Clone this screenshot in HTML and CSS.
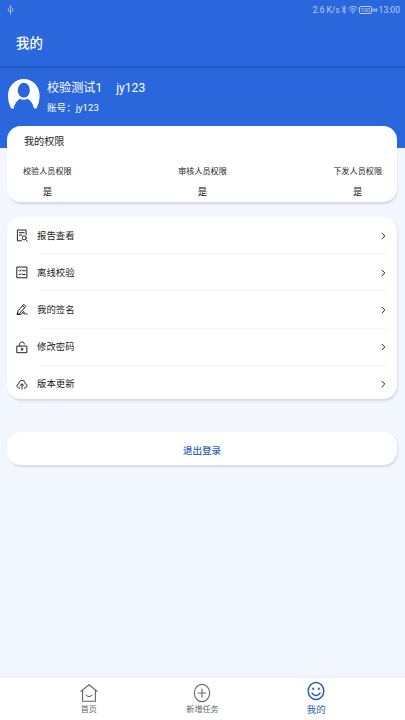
FILE: index.html
```html
<!DOCTYPE html>
<html lang="zh-CN">
<head>
<meta charset="utf-8">
<meta name="viewport" content="width=device-width, initial-scale=1">
<title>我的</title>
<link rel="stylesheet" href="styles.css">
</head>
<body>
<div class="app">
  <header class="top">
    <div class="status">
      <svg class="usb" viewBox="0 0 7 10"><path d="M3.5 1v8M1.3 3.5v2.2l2.2 1.3 2.2-1.3V3.5M2.6 2l.9-1 .9 1"/></svg>
      <div class="status-right">
        <span>2.6 K/s</span>
        <svg class="bt" viewBox="0 0 6 9"><path d="M.8 2.5l4.2 4-2 1.8V.7l2 1.8-4.2 4"/></svg>
        <svg class="wifi" viewBox="0 0 10 9"><path d="M.6 3.3c2.6-2.5 6.2-2.5 8.8 0M2 5c1.8-1.7 4.2-1.7 6 0M3.5 6.6c1-.9 2-.9 3 0M4.7 8h.6"/></svg>
        <span class="battery">100</span>
        <svg class="charge" viewBox="0 0 6 8"><path d="M0 4h6M2 2.3v3.4M4.2 2.3v3.4"/></svg>
        <span>13:00</span>
      </div>
    </div>
    <h1 class="title">我的</h1>
  </header>
  <section class="profile">
    <svg class="avatar" viewBox="0 0 32 34"><path class="avatar-bg" d="M3.2 30.4C1 26.5 0 22 0 17.5A15.8 16.6 0 0 1 31.6 17.5C31.6 22 30.6 26.5 28.4 30.4H26C24.8 25.5 22.8 22.8 19.8 20.8Q15.8 22.8 11.8 20.8C8.8 22.8 6.8 25.5 5.6 30.4Z"/><ellipse class="avatar-head" cx="15.8" cy="12.2" rx="6.1" ry="7.4"/></svg>
    <div class="who">
      <div class="name"><span>校验测试1</span><span>jy123</span></div>
      <div class="account">账号：jy123</div>
    </div>
  </section>
  <main class="main">
    <section class="card rights">
      <h2>我的权限</h2>
      <div class="rights-row">
        <div class="right"><span>校验人员权限</span><b>是</b></div>
        <div class="right"><span>审核人员权限</span><b>是</b></div>
        <div class="right"><span>下发人员权限</span><b>是</b></div>
      </div>
    </section>
    <nav class="card menu">
      <a class="item"><svg class="ico" viewBox="0 0 12 13"><path d="M5.5 11.8H1.4V1h8.7v5M3.4 3.7h4.8M3.4 6.1h2.4M9.7 10.5l1.5 1.6"/><circle cx="8.2" cy="8.9" r="2"/></svg><span>报告查看</span><svg class="go" viewBox="0 0 5 8"><path d="M1 1.2L3.8 4 1 6.8"/></svg></a>
      <a class="item"><svg class="ico" viewBox="0 0 12 13"><path d="M1.2 1h9.7v10.8H1.2zM3 4.5l.8.8 1.2-1.5M3 8.3l.8.8L5 7.6M6.5 4.7h2.8M6.5 8.5h2.8"/></svg><span>离线校验</span><svg class="go" viewBox="0 0 5 8"><path d="M1 1.2L3.8 4 1 6.8"/></svg></a>
      <a class="item"><svg class="ico" viewBox="0 0 12 13"><path d="M1.2 11l.9-3.3L7.8 1.3l2 2L4 10zM6.6 2.7l2 2M1.2 11.4h3.6c1.4 0 1.7-3 3-2.8 1 .2-.7 2.5.3 2.6.7.1.7-.9 1.4-.8.5.1.5.8 1.7.8"/></svg><span>我的签名</span><svg class="go" viewBox="0 0 5 8"><path d="M1 1.2L3.8 4 1 6.8"/></svg></a>
      <a class="item"><svg class="ico" viewBox="0 0 12 13"><path d="M1.2 5.1h9.7v6.6H1.2zM3.6 5V3.3C3.6.2 8.4.2 8.4 3M6 7.1v2.6M5 8.1h2"/></svg><span>修改密码</span><svg class="go" viewBox="0 0 5 8"><path d="M1 1.2L3.8 4 1 6.8"/></svg></a>
      <a class="item"><svg class="ico" viewBox="0 0 12 13"><path d="M3.7 10H3C.3 9.5.5 6.2 2.8 5.8 3 1.2 9 1.2 9.2 5.7c2.4.4 2.5 3.8-.2 4.3h-.7M6 11V6M4.2 7.6L6 5.8l1.8 1.8"/></svg><span>版本更新</span><svg class="go" viewBox="0 0 5 8"><path d="M1 1.2L3.8 4 1 6.8"/></svg></a>
    </nav>
    <button class="card logout">退出登录</button>
  </main>
  <footer class="tabs">
    <a class="tab"><svg viewBox="0 0 18 20"><path d="M1 8.3L9 1.8l8 6.5M2.6 7.3v10.9h12.8V7.3M6 12c1.4 2.1 4.6 2.1 6 0"/></svg><span>首页</span></a>
    <a class="tab"><svg viewBox="0 0 18 20"><ellipse cx="9" cy="10" rx="7.7" ry="8.6"/><path d="M9 6v8M5.3 10h7.4"/></svg><span>新增任务</span></a>
    <a class="tab active"><svg viewBox="0 0 18 20"><ellipse cx="9" cy="10" rx="7.8" ry="8.6"/><path d="M5 12c1.5 3.2 6.5 3.2 8 0"/><path class="eyes" d="M6.2 7.5v.5M11.8 7.5v.5"/></svg><span>我的</span></a>
  </footer>
</div>
</body>
</html>
```
FILE: styles.css
```css
* { box-sizing: border-box; }
body { margin: 0; font-family: Roboto, "Noto Sans CJK SC", sans-serif; color: #222; }
svg { display: block; flex: none; fill: none; stroke: currentColor; stroke-linecap: round; stroke-linejoin: round; }
h1, h2 { margin: 0; font-weight: 400; }
.app {
  height: 720px;
  display: flex;
  flex-direction: column;
  background: linear-gradient(#2a67dc 148px, #f2f6fe 148px);
}
.top { height: 66px; color: #fff; }
.status {
  height: 19px;
  padding: 0 5px 0 7px;
  display: flex;
  align-items: center;
  justify-content: space-between;
  font-size: 8.6px;
  color: #b9cef7;
}
.status-right { display: flex; align-items: center; }
.status-right span:first-child { letter-spacing: -.1px; }
.usb { width: 7px; height: 10px; stroke-width: .8; }
.bt { width: 6px; height: 9px; margin-left: 1px; stroke-width: .8; }
.wifi { width: 10px; height: 9px; margin-left: 1px; stroke-width: 1; }
.battery {
  width: 13px;
  height: 8px;
  margin-left: 1px;
  border: .8px solid currentColor;
  border-radius: 2px;
  font-size: 6px;
  line-height: 6px;
  text-align: center;
  letter-spacing: -.2px;
}
.charge { width: 6px; height: 8px; margin-right: 1px; stroke-width: .8; }
.title { padding: 14px 0 0 16px; font-size: 13.4px; line-height: 22px; font-weight: 500; }
.profile {
  height: 60px;
  padding: 11px 0 0 8px;
  border-top: 2px solid #215abf;
  display: flex;
  color: #fff;
}
.avatar { width: 32px; height: 34px; margin-top: -1px; stroke: none; }
.avatar-bg { fill: #fff; }
.avatar-head { fill: #2a67dc; }
.who { margin: 1px 0 0 7px; }
.name { display: flex; gap: 14px; font-size: 12.1px; line-height: 16px; }
.account { margin-top: 5px; font-size: 9.6px; line-height: 14px; }
.main { flex: 1; padding: 0 8px 0 7px; }
.card { background: #fff; box-shadow: 1px 3px 2px -1px #d5dce6, 1px 1px 2px #dce2eb; }
.rights { height: 76px; border-radius: 14px; padding: 8px 15px 0 16px; box-shadow: 1px 3px 2px -1px rgba(60, 80, 110, .18); }
.rights h2 { padding-left: 1px; font-size: 10.1px; line-height: 16px; }
.rights-row { margin-top: 14px; display: flex; justify-content: space-between; }
.right { display: flex; flex-direction: column; align-items: center; font-size: 8.1px; line-height: 14px; }
.right b { margin-top: 7px; font-size: 9.3px; line-height: 14px; font-weight: 400; }
.menu { height: 182px; margin-top: 15px; border-radius: 14px; }
.item {
  height: 37.2px;
  padding: 0 11px 0 9px;
  display: flex;
  align-items: center;
  background: linear-gradient(#f4f4f4, #f4f4f4) 33px 100% / 348px 1px no-repeat;
}
.item:last-child { background: none; }
.item span { flex: 1; margin-left: 9px; font-size: 9.4px; line-height: 14px; }
.ico { width: 12px; height: 13px; stroke-width: 1; }
.go { width: 5px; height: 8px; stroke-width: 1; }
.logout {
  display: block;
  width: 100%;
  height: 33px;
  margin-top: 33px;
  padding: 4px 0 0;
  border: 0;
  border-radius: 14px;
  font: 500 9.5px/14px Roboto, "Noto Sans CJK SC", sans-serif;
  color: #2b62b8;
}
.tabs {
  height: 42px;
  padding: 5px 32px 0;
  display: grid;
  grid-template-columns: repeat(3, 1fr);
  background: #fff;
  box-shadow: 0 -1px 1px #ebeff5;
}
.tab { display: flex; flex-direction: column; align-items: center; font-size: 8.1px; line-height: 13px; color: #666; }
.tab svg { width: 18px; height: 20px; stroke-width: 1.1; }
.tab.active { margin-top: -2px; font-size: 9.4px; line-height: 17px; color: #2b62b8; }
.tab.active svg { stroke-width: 1.5; }
.eyes { stroke-width: 2; }
```
